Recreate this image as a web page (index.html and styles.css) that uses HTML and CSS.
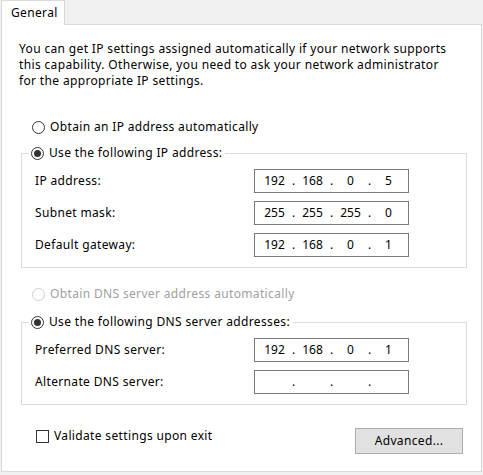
FILE: index.html
```html
<!DOCTYPE html>
<html lang="en">
<head>
<meta charset="utf-8">
<title>General</title>
<link rel="stylesheet" href="styles.css">
</head>
<body>
<div class="dialog">
  <div class="tabs"><div class="tab">General</div></div>
  <div class="panel">
    <p class="intro">You can get IP settings assigned automatically if your network supports this capability. Otherwise, you need to ask your network administrator for the appropriate IP settings.</p>

    <div class="radio radio-top"><span class="dot"></span><span>Obtain an IP address automatically</span></div>

    <fieldset class="group group-ip">
      <legend class="radio checked"><span class="dot"></span><span>Use the following IP address:</span></legend>
      <div class="row"><span class="label">IP address:</span>
        <div class="ipbox"><span class="oct">192</span><span class="sep">.</span><span class="oct">168</span><span class="sep">.</span><span class="oct">0</span><span class="sep">.</span><span class="oct">5</span></div></div>
      <div class="row"><span class="label">Subnet mask:</span>
        <div class="ipbox"><span class="oct">255</span><span class="sep">.</span><span class="oct">255</span><span class="sep">.</span><span class="oct">255</span><span class="sep">.</span><span class="oct">0</span></div></div>
      <div class="row"><span class="label">Default gateway:</span>
        <div class="ipbox"><span class="oct">192</span><span class="sep">.</span><span class="oct">168</span><span class="sep">.</span><span class="oct">0</span><span class="sep">.</span><span class="oct">1</span></div></div>
    </fieldset>

    <div class="radio radio-dns disabled"><span class="dot"></span><span>Obtain DNS server address automatically</span></div>

    <fieldset class="group group-dns">
      <legend class="radio checked"><span class="dot"></span><span>Use the following DNS server addresses:</span></legend>
      <div class="row"><span class="label">Preferred DNS server:</span>
        <div class="ipbox"><span class="oct">192</span><span class="sep">.</span><span class="oct">168</span><span class="sep">.</span><span class="oct">0</span><span class="sep">.</span><span class="oct">1</span></div></div>
      <div class="row"><span class="label">Alternate DNS server:</span>
        <div class="ipbox"><span class="oct"></span><span class="sep">.</span><span class="oct"></span><span class="sep">.</span><span class="oct"></span><span class="sep">.</span><span class="oct"></span></div></div>
    </fieldset>

    <div class="footer">
      <label class="check"><span class="box"></span><span>Validate settings upon exit</span></label>
      <button class="btn" type="button">Advanced...</button>
    </div>
  </div>
</div>
</body>
</html>
```
FILE: styles.css
```css
html, body {
  margin: 0;
  padding: 0;
  background: #f0f0f0;
}
body {
  font-family: "Noto Sans", "Open Sans", sans-serif;
  font-size: 12px;
  line-height: 16px;
  letter-spacing: 0.35px;
  color: #000;
  width: 483px;
  height: 475px;
  overflow: hidden;
}
.dialog {
  padding-left: 1px;
}
.tabs {
  display: flex;
  height: 24px;
  position: relative;
  z-index: 1;
}
.tab {
  width: 64px;
  height: 25px;
  box-sizing: border-box;
  background: #fff;
  border: 1px solid #d9d9d9;
  border-bottom: none;
  padding: 4px 0 0 9px;
}
.panel {
  width: 481px;
  height: 448px;
  box-sizing: border-box;
  background: #fff;
  border: 1px solid #d9d9d9;
  padding: 16px 14px 0 17px;
}
.intro {
  margin: 0;
  width: 440px;
}
.radio {
  display: flex;
  align-items: center;
  gap: 5px;
  height: 16px;
}
.radio .dot {
  width: 13px;
  height: 13px;
  box-sizing: border-box;
  border: 1px solid #333;
  border-radius: 50%;
  background: #fff;
  display: flex;
  align-items: center;
  justify-content: center;
}
.radio.checked .dot::after {
  content: "";
  width: 7px;
  height: 7px;
  border-radius: 50%;
  background: #333;
}
.radio.disabled {
  color: #a0a0a0;
}
.radio.disabled .dot {
  border-color: #cccccc;
}
.radio-top {
  margin: 30px 0 0 13px;
}
.group {
  margin: 10px 0 0 2px;
  padding: 8px 0 10px 13px;
  border: 1px solid #dcdcdc;
  min-width: 0;
}
.group legend {
  padding: 0 3px 0 2px;
  margin-left: -6px;
}
.group-dns {
  margin-top: 12px;
  padding-bottom: 10px;
}
.radio-dns {
  margin: 18px 0 0 13px;
}
.row {
  display: grid;
  grid-template-columns: 219px 155px;
  align-items: center;
  height: 24px;
}
.row + .row {
  margin-top: 8px;
}
.ipbox {
  height: 24px;
  box-sizing: border-box;
  border: 1px solid #7a7a7a;
  background: #fff;
  display: flex;
  align-items: center;
  padding-left: 4px;
  letter-spacing: 0;
}
.oct {
  width: 31px;
  text-align: center;
}
.sep {
  width: 7px;
  text-align: center;
}
.footer {
  display: flex;
  align-items: flex-start;
  justify-content: space-between;
  margin: 23px 4px 0 17px;
}
.check {
  display: flex;
  align-items: center;
  gap: 5px;
  height: 16px;
}
.check .box {
  width: 13px;
  height: 13px;
  box-sizing: border-box;
  border: 1px solid #333;
  background: #fff;
}
.btn {
  width: 108px;
  height: 26px;
  margin-top: 0;
  box-sizing: border-box;
  background: #e1e1e1;
  border: 1px solid #adadad;
  font: inherit;
  letter-spacing: 0.35px;
  color: #000;
  padding: 0;
}
```
